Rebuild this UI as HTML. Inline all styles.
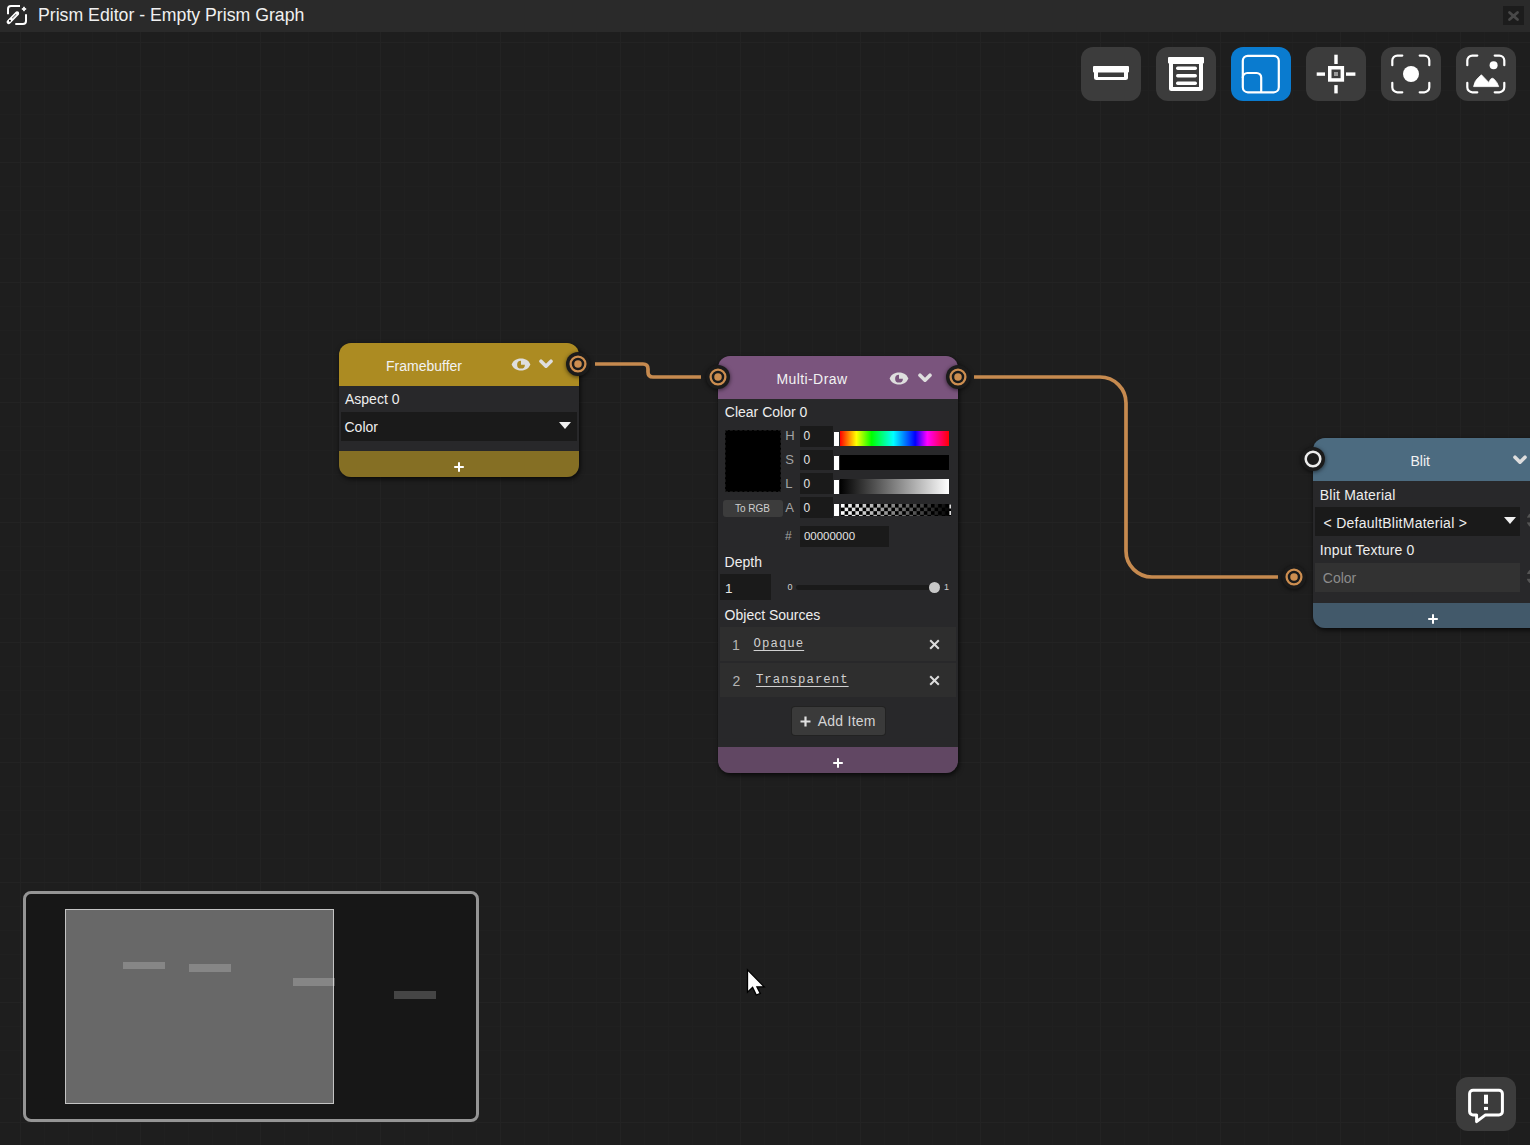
<!DOCTYPE html>
<html><head><meta charset="utf-8">
<style>
*{box-sizing:border-box;margin:0;padding:0}
html,body{width:1530px;height:1145px;overflow:hidden;background:#1e1e1e;font-family:"Liberation Sans",sans-serif;color:#e6e6e6}
.abs{position:absolute}
#canvas{position:absolute;left:0;top:32px;width:1530px;height:1113px;background-color:#1e1e1e;
background-image:
linear-gradient(to right,#232323 1px,transparent 1px),
linear-gradient(to bottom,#232323 1px,transparent 1px),
linear-gradient(to right,#202020 1px,transparent 1px),
linear-gradient(to bottom,#202020 1px,transparent 1px);
background-size:120px 120px,120px 120px,24px 24px,24px 24px;
background-position:20px 0,0 10px,20px 0,0 10px}
#titlebar{position:absolute;left:0;top:0;width:1530px;height:32px;background:#2a2a2a}
#titlebar .t{position:absolute;left:38px;top:4.5px;font-size:17.7px;color:#f0f0f0;line-height:20px}
.tbtn{position:absolute;top:47px;width:60px;height:54px;border-radius:12px;background:#3c3c3c}
.tbtn svg{position:absolute;left:0;top:0}
.node{position:absolute;border-radius:12px;background:#28282a;box-shadow:1px 2px 5px rgba(0,0,0,.75)}
.node .hdr{position:absolute;left:0;top:0;right:0;height:43px;border-radius:12px 12px 0 0}
.node .ftr{position:absolute;left:0;right:0;bottom:0;height:26px;border-radius:0 0 12px 12px}
.ttl{position:absolute;font-size:14px;line-height:16px;color:#f2f2f2}
.lbl{position:absolute;font-size:14px;line-height:16px;color:#eeeeee;white-space:nowrap}
.port{position:absolute;width:24px;height:24px;border-radius:50%;background:#1b1b1b;box-shadow:0 1px 4px rgba(0,0,0,.6)}

.eye{position:absolute}
.dd{position:absolute;background:#1a1a1a}
.tri{position:absolute;width:0;height:0;border-left:6.7px solid transparent;border-right:6.7px solid transparent;border-top:7.5px solid #f0f0f0}
.plus{position:absolute}
.fld{position:absolute;background:#1a1a1a}
.hsl{position:absolute;font-size:13px;line-height:16px;color:#a4a4a4}
.num{position:absolute;font-size:12px;line-height:16px;color:#e4e4e4}
.bar{position:absolute;left:840px;width:109.3px}
.hdl{position:absolute;left:834px;width:5px;background:#fff}
.item{position:absolute;left:720px;width:236px;height:34.5px;background:#2e2e2e}
.idx{position:absolute;font-size:14px;line-height:16px;color:#b4b4b4}
.mono{position:absolute;font-family:"Liberation Mono",monospace;font-size:12.3px;line-height:16px;color:#d0d0d0;letter-spacing:1.05px;text-decoration:underline;text-decoration-thickness:1px;text-underline-offset:3px}
</style></head><body>
<div id="canvas"></div>

<svg class="abs" style="left:0;top:0" width="1530" height="1145">
 <path d="M595 364H643Q648 364 648 369V372Q648 377 653 377H701" fill="none" stroke="#c68a4f" stroke-width="3.7"/>
 <path d="M974 377H1100A26 26 0 0 1 1126 403V551A26 26 0 0 0 1152 577H1278" fill="none" stroke="#c68a4f" stroke-width="3.7"/>
</svg>

<!-- Framebuffer -->
<div class="node" style="left:339px;top:343px;width:240px;height:134px">
 <div class="hdr" style="background:#ac8b22"></div>
 <div class="ftr" style="background:#856f24;height:26px"></div>
</div>
<div class="ttl" style="left:386px;top:358.3px">Framebuffer</div>
<svg class="eye" style="left:510.5px;top:358px" width="20" height="14" viewBox="0 0 20 14"><path d="M0.6 6.6C2.5 2 6.5 0.6 10 0.6C13.5 0.6 17.5 2 19.4 6.6C17.5 11.2 13.5 12.6 10 12.6C6.5 12.6 2.5 11.2 0.6 6.6Z" fill="#dedede"/><path d="M10 2.8A3.9 3.9 0 1 0 13.9 6.7H10Z" fill="#ac8b22"/></svg>
<svg class="eye" style="left:539px;top:359px" width="14" height="10" viewBox="0 0 14 10"><path d="M2 2.2L7 7.2L12 2.2" fill="none" stroke="#dedede" stroke-width="3.6" stroke-linecap="round" stroke-linejoin="round"/></svg>
<div class="lbl" style="left:345px;top:391px">Aspect 0</div>
<div class="dd" style="left:341px;top:412px;width:236px;height:28.5px"></div>
<div class="lbl" style="left:344.5px;top:419px">Color</div>
<div class="tri" style="left:559.3px;top:421.6px"></div>
<svg class="plus" style="left:453px;top:461px" width="12" height="12" viewBox="0 0 12 12"><path d="M6 1.2V10.8M1.2 6H10.8" stroke="#fff" stroke-width="2"/></svg>
<div class="port" style="left:566.4px;top:352px"><svg width="24" height="24" viewBox="0 0 24 24" style="position:absolute;left:0;top:0"><circle cx="12" cy="12" r="7.4" fill="none" stroke="#cd8e50" stroke-width="2.3"/><circle cx="12" cy="12" r="3.75" fill="#cd8e50"/></svg></div>

<!-- Multi-Draw -->
<div class="node" style="left:718px;top:356px;width:240px;height:417px">
 <div class="hdr" style="background:#7a547d"></div>
 <div class="ftr" style="background:#614763"></div>
</div>
<div class="ttl" style="left:776.5px;top:371.4px;letter-spacing:0.4px">Multi-Draw</div>
<svg class="eye" style="left:889px;top:371.6px" width="20" height="14" viewBox="0 0 20 14"><path d="M0.6 6.6C2.5 2 6.5 0.6 10 0.6C13.5 0.6 17.5 2 19.4 6.6C17.5 11.2 13.5 12.6 10 12.6C6.5 12.6 2.5 11.2 0.6 6.6Z" fill="#dedede"/><path d="M10 2.8A3.9 3.9 0 1 0 13.9 6.7H10Z" fill="#7a547d"/></svg>
<svg class="eye" style="left:918px;top:373px" width="14" height="10" viewBox="0 0 14 10"><path d="M2 2.2L7 7.2L12 2.2" fill="none" stroke="#dedede" stroke-width="3.6" stroke-linecap="round" stroke-linejoin="round"/></svg>
<div class="port" style="left:705.5px;top:365.3px"><svg width="24" height="24" viewBox="0 0 24 24" style="position:absolute;left:0;top:0"><circle cx="12" cy="12" r="7.4" fill="none" stroke="#cd8e50" stroke-width="2.3"/><circle cx="12" cy="12" r="3.75" fill="#cd8e50"/></svg></div>
<div class="port" style="left:945.6px;top:365.3px"><svg width="24" height="24" viewBox="0 0 24 24" style="position:absolute;left:0;top:0"><circle cx="12" cy="12" r="7.4" fill="none" stroke="#cd8e50" stroke-width="2.3"/><circle cx="12" cy="12" r="3.75" fill="#cd8e50"/></svg></div>
<div class="lbl" style="left:724.8px;top:404.2px">Clear Color 0</div>
<div class="abs" style="left:725px;top:430px;width:55.5px;height:62px;background:#000;border:1px dashed #161616"></div>
<div class="abs" style="left:723.3px;top:500px;width:59.7px;height:16.5px;background:#3c3c3c;border-radius:3px"></div>
<div class="abs" style="left:734.9px;top:502.5px;font-size:10px;line-height:12px;color:#cfcfcf">To RGB</div>
<div class="hsl" style="left:785.3px;top:427.5px">H</div>
<div class="hsl" style="left:785.3px;top:452px">S</div>
<div class="hsl" style="left:785.3px;top:475.6px">L</div>
<div class="hsl" style="left:785.3px;top:499.5px">A</div>
<div class="fld" style="left:800.2px;top:426.3px;width:32.7px;height:20.6px"></div>
<div class="fld" style="left:800.2px;top:450.1px;width:32.7px;height:20.4px"></div>
<div class="fld" style="left:800.2px;top:473.4px;width:32.7px;height:20.4px"></div>
<div class="fld" style="left:800.2px;top:497.3px;width:32.7px;height:20.3px"></div>
<div class="num" style="left:803.6px;top:428.4px">0</div>
<div class="num" style="left:803.6px;top:452.2px">0</div>
<div class="num" style="left:803.6px;top:475.8px">0</div>
<div class="num" style="left:803.6px;top:499.7px">0</div>
<div class="bar" style="top:431px;height:15px;background:linear-gradient(to right,#f00 0%,#ff0 15%,#0f0 29%,#0ff 49%,#00f 69%,#f0f 80%,#f00 100%)"></div>
<div class="bar" style="top:455.3px;height:14.7px;background:#000"></div>
<div class="bar" style="top:479px;height:15px;background:linear-gradient(to right,#000,#fff)"></div>
<svg class="abs" style="left:840.6px;top:503.7px" width="110.4" height="12.3" viewBox="0 0 110.4 12.3">
 <defs><pattern id="chk" width="7.2" height="7.2" patternUnits="userSpaceOnUse"><rect width="7.2" height="7.2" fill="#000"/><rect width="3.6" height="3.6" fill="#fff"/><rect x="3.6" y="3.6" width="3.6" height="3.6" fill="#fff"/></pattern>
 <linearGradient id="fade" x1="0" x2="1" y1="0" y2="0"><stop offset="0" stop-color="#000" stop-opacity="0"/><stop offset="1" stop-color="#000" stop-opacity="1"/></linearGradient></defs>
 <rect width="110.4" height="12.3" fill="url(#chk)"/><rect width="110.4" height="12.3" fill="url(#fade)"/>
 <rect x="108.4" y="0.5" width="2" height="4" fill="#ddd"/><rect x="108.4" y="7" width="2" height="4" fill="#ddd"/>
</svg>
<div class="hdl" style="top:432px;height:14px"></div>
<div class="hdl" style="top:456px;height:14px"></div>
<div class="hdl" style="top:479.5px;height:14.5px"></div>
<div class="hdl" style="top:503.5px;height:12.5px"></div>
<div class="hsl" style="left:785.1px;top:527.6px;font-size:12px">#</div>
<div class="fld" style="left:800px;top:526.2px;width:88.8px;height:20.7px"></div>
<div class="num" style="left:803.9px;top:527.6px;font-size:11.5px">00000000</div>
<div class="lbl" style="left:724.6px;top:554.2px">Depth</div>
<div class="fld" style="left:720.3px;top:574.3px;width:50.4px;height:25.4px"></div>
<div class="num" style="left:725px;top:581px;font-size:13.5px">1</div>
<div class="abs" style="left:787.5px;top:582px;font-size:9px;line-height:11px;color:#d0d0d0">0</div>
<div class="abs" style="left:796.2px;top:585.3px;width:140px;height:4.8px;background:#1a1a1a;border-radius:2.4px"></div>
<div class="abs" style="left:929px;top:582px;width:11px;height:11px;border-radius:50%;background:#c8c8c8"></div>
<div class="abs" style="left:944px;top:582px;font-size:9px;line-height:11px;color:#d0d0d0">1</div>
<div class="lbl" style="left:724.6px;top:607.2px">Object Sources</div>
<div class="item" style="top:626.8px"></div>
<div class="item" style="top:662.8px"></div>
<div class="idx" style="left:732px;top:637.3px">1</div>
<div class="mono" style="left:753.6px;top:635.8px">Opaque</div>
<div class="idx" style="left:732.6px;top:673px">2</div>
<div class="mono" style="left:755.9px;top:671.6px">Transparent</div>
<svg class="abs" style="left:929px;top:639px" width="11" height="11" viewBox="0 0 11 11"><path d="M1.2 1.2L9.8 9.8M9.8 1.2L1.2 9.8" stroke="#dcdcdc" stroke-width="2"/></svg>
<svg class="abs" style="left:929px;top:675px" width="11" height="11" viewBox="0 0 11 11"><path d="M1.2 1.2L9.8 9.8M9.8 1.2L1.2 9.8" stroke="#dcdcdc" stroke-width="2"/></svg>
<div class="abs" style="left:792.2px;top:707px;width:92.6px;height:28px;background:#3a3a3a;border-radius:3px;box-shadow:0 0 0 1px #222"></div>
<svg class="abs" style="left:799.5px;top:715.5px" width="11" height="11" viewBox="0 0 11 11"><path d="M5.5 0.5V10.5M0.5 5.5H10.5" stroke="#e0e0e0" stroke-width="2.2"/></svg>
<div class="lbl" style="left:817.7px;top:712.8px;color:#d4d4d4;letter-spacing:0.25px">Add Item</div>
<svg class="plus" style="left:832.4px;top:757.3px" width="12" height="12" viewBox="0 0 12 12"><path d="M6 1.2V10.8M1.2 6H10.8" stroke="#fff" stroke-width="2"/></svg>

<!-- Blit -->
<div class="node" style="left:1313px;top:438px;width:240px;height:190px">
 <div class="hdr" style="background:#4c6b80"></div>
 <div class="ftr" style="background:#42596a;height:25px"></div>
</div>
<div class="ttl" style="left:1410.5px;top:453.2px">Blit</div>
<svg class="eye" style="left:1513px;top:455px" width="14" height="10" viewBox="0 0 14 10"><path d="M2 2.2L7 7.2L12 2.2" fill="none" stroke="#dedede" stroke-width="3.6" stroke-linecap="round" stroke-linejoin="round"/></svg>
<div class="port" style="left:1300.5px;top:447.2px"><svg width="24" height="24" viewBox="0 0 24 24" style="position:absolute;left:0;top:0"><circle cx="12" cy="12" r="7.3" fill="none" stroke="#ececec" stroke-width="2.5"/></svg></div>
<div class="lbl" style="left:1319.8px;top:487px;letter-spacing:0.2px">Blit Material</div>
<div class="dd" style="left:1315px;top:507px;width:205px;height:28.8px"></div>
<div class="lbl" style="left:1323.6px;top:514.6px;letter-spacing:0.25px">&lt; DefaultBlitMaterial &gt;</div>
<div class="tri" style="left:1503.5px;top:516.9px;border-left-width:6.3px;border-right-width:6.3px;border-top-width:7px"></div>
<div class="lbl" style="left:1319.8px;top:542.2px;letter-spacing:0.15px">Input Texture 0</div>
<div class="abs" style="left:1315px;top:563px;width:205px;height:29px;background:#323232"></div>
<div class="lbl" style="left:1322.8px;top:570.2px;color:#8c8c8c">Color</div>
<div class="port" style="left:1282.3px;top:564.6px"><svg width="24" height="24" viewBox="0 0 24 24" style="position:absolute;left:0;top:0"><circle cx="12" cy="12" r="7.4" fill="none" stroke="#cd8e50" stroke-width="2.3"/><circle cx="12" cy="12" r="3.75" fill="#cd8e50"/></svg></div>
<svg class="plus" style="left:1427.3px;top:613px" width="12" height="12" viewBox="0 0 12 12"><path d="M6 1.2V10.8M1.2 6H10.8" stroke="#fff" stroke-width="2"/></svg>


<svg class="abs" style="left:1524px;top:510px" width="6" height="20" viewBox="1524 510 6 20"><circle cx="1534.5" cy="520.1" r="8" fill="#555"/><rect x="1524" y="517.6" width="6" height="4.8" fill="#28282a"/></svg>
<svg class="abs" style="left:1524px;top:566px" width="6" height="20" viewBox="1524 566 6 20"><circle cx="1534.5" cy="576.5" r="8" fill="#555"/><rect x="1524" y="574" width="6" height="4.8" fill="#28282a"/></svg>
<!-- minimap -->
<div class="abs" style="left:23px;top:891px;width:456px;height:231px;border:3px solid #959595;border-radius:8px;background:#171717"></div>
<div class="abs" style="left:65px;top:909px;width:269px;height:195px;background:#686868;border:1px solid #c4c4c4"></div>
<div class="abs" style="left:122.5px;top:961.5px;width:42px;height:7.5px;background:rgba(255,255,255,0.2)"></div>
<div class="abs" style="left:189px;top:964px;width:42px;height:7.5px;background:rgba(255,255,255,0.2)"></div>
<div class="abs" style="left:293px;top:978.2px;width:42px;height:7.8px;background:rgba(255,255,255,0.2)"></div>
<div class="abs" style="left:393.5px;top:991px;width:42px;height:7.5px;background:rgba(255,255,255,0.2)"></div>
<!-- cursor -->
<svg class="abs" style="left:740px;top:962px" width="32" height="40" viewBox="740 962 32 40">
 <path d="M747.5 969.8V992.3L752.6 987.4L756.3 995L760.3 993.4L756.9 986.8H764.2Z" fill="#fff" stroke="#000" stroke-width="1.3" stroke-linejoin="miter"/>
</svg>

<div id="titlebar">
 <svg class="abs" style="left:0;top:0" width="34" height="31" viewBox="0 0 34 31">
  <path d="M8 14.3V9a3 3 0 0 1 3-3H20" fill="none" stroke="#fff" stroke-width="2"/>
  <path d="M26 14.3V21a3 3 0 0 1-3 3H15.3" fill="none" stroke="#fff" stroke-width="2"/>
  <path d="M8.7 21.9L17 13.6" stroke="#fff" stroke-width="4.2" stroke-linecap="round"/>
  <path d="M18.6 15.1L15.5 12L18.8 11.8Z" fill="#fff"/>
  <circle cx="12.8" cy="17.8" r="0.55" fill="#000"/><circle cx="13.8" cy="16.8" r="0.55" fill="#000"/><circle cx="14.8" cy="15.8" r="0.55" fill="#000"/><circle cx="15.8" cy="14.8" r="0.55" fill="#000"/>
  <circle cx="9.9" cy="20.8" r="0.95" fill="#000"/>
  <path d="M24 6.8Q24.6 8.6 26.2 9Q24.6 9.4 24 11.2Q23.4 9.4 21.8 9Q23.4 8.6 24 6.8Z" fill="#fff" stroke="#fff" stroke-width="0.8" stroke-linejoin="round"/>
 </svg>
 <div class="t">Prism Editor - Empty Prism Graph</div>
 <div class="abs" style="left:1503px;top:6px;width:21px;height:19px;background:#1c1c1c"></div>
 <svg class="abs" style="left:1503px;top:6px" width="21" height="19" viewBox="0 0 21 19">
  <path d="M6.5 6.5L14.5 13.5M14.5 6.5L6.5 13.5" stroke="#484848" stroke-width="2.8" stroke-linecap="round"/>
  <rect x="8.5" y="8" width="4" height="4" fill="#484848"/>
 </svg>
</div>

<div class="tbtn" style="left:1081px"><svg width="60" height="54" viewBox="0 0 60 54">
 <rect x="12" y="19" width="36" height="6.5" rx="1" fill="#fff"/>
 <rect x="13" y="21" width="34" height="12" rx="2.5" fill="#fff"/>
 <rect x="17" y="25.5" width="26" height="4.5" fill="#3c3c3c"/>
</svg></div>
<div class="tbtn" style="left:1156px"><svg width="60" height="54" viewBox="0 0 60 54">
 <rect x="12" y="10" width="36" height="6.5" rx="1" fill="#fff"/>
 <rect x="13" y="14" width="34" height="30" rx="2.5" fill="#fff"/>
 <rect x="17" y="17" width="26" height="23" fill="#3c3c3c"/>
 <rect x="20" y="19.5" width="21" height="3.4" rx="1.7" fill="#fff"/>
 <rect x="20" y="27" width="21" height="3.4" rx="1.7" fill="#fff"/>
 <rect x="20" y="34.6" width="21" height="3.4" rx="1.7" fill="#fff"/>
</svg></div>
<div class="tbtn" style="left:1231px;background:#0a7bcf"><svg width="60" height="54" viewBox="0 0 60 54">
 <rect x="11.8" y="8.8" width="36" height="36.5" rx="5" fill="none" stroke="#fff" stroke-width="2.2"/>
 <path d="M11.8 31V30.5a4.5 4.5 0 0 1 4.5-4.5H25.7a4.5 4.5 0 0 1 4.5 4.5V45.3" fill="none" stroke="#fff" stroke-width="2.2"/>
</svg></div>
<div class="tbtn" style="left:1306px"><svg width="60" height="54" viewBox="0 0 60 54">
 <rect x="23.75" y="20.75" width="12.6" height="12.2" fill="none" stroke="#fff" stroke-width="3.5"/>
 <rect x="28" y="25" width="4" height="4" fill="#9a9a9a"/>
 <rect x="28.3" y="7.7" width="3.4" height="9.3" fill="#fff"/>
 <rect x="28.3" y="38.1" width="3.4" height="8.3" fill="#fff"/>
 <rect x="10.7" y="25.4" width="8.3" height="3.4" fill="#fff"/>
 <rect x="40" y="25.4" width="9.4" height="3.4" fill="#fff"/>
</svg></div>
<div class="tbtn" style="left:1381px"><svg width="60" height="54" viewBox="0 0 60 54">
 <path d="M11.3 18.2V13.6a5 5 0 0 1 5-5H21.3M38.7 8.6H43.3a5 5 0 0 1 5 5V18.2M48.3 35.8V40.3a5 5 0 0 1-5 5H38.7M21.3 45.3H16.3a5 5 0 0 1-5-5V35.8" fill="none" stroke="#fff" stroke-width="2.2" stroke-linecap="round"/>
 <circle cx="30" cy="27" r="8" fill="#fff"/>
</svg></div>
<div class="tbtn" style="left:1456px"><svg width="60" height="54" viewBox="0 0 60 54">
 <path d="M11.3 18.2V13.6a5 5 0 0 1 5-5H21.3M38.7 8.6H43.3a5 5 0 0 1 5 5V18.2M48.3 35.8V40.3a5 5 0 0 1-5 5H38.7M21.3 45.3H16.3a5 5 0 0 1-5-5V35.8" fill="none" stroke="#fff" stroke-width="2.2" stroke-linecap="round"/>
 <circle cx="37.6" cy="18.2" r="4" fill="#fff"/>
 <path d="M17.6 39.6Q18.6 33.8 22.4 30.6L25.4 27.8L32.7 35.4L34.6 32.2Q36.3 30.2 38.4 32.4Q41.4 35.4 42.7 39.6Z" fill="#fff" stroke="#fff" stroke-width="0.8" stroke-linejoin="round"/>
</svg></div>
<div class="tbtn" style="left:1456px;top:1077px"><svg width="60" height="54" viewBox="0 0 60 54">
 <path d="M17 13.3H43a3.4 3.4 0 0 1 3.4 3.4V34.5a3.4 3.4 0 0 1-3.4 3.4H29.5L20.6 44.6V37.9H17a3.4 3.4 0 0 1-3.4-3.4V16.7a3.4 3.4 0 0 1 3.4-3.4Z" fill="none" stroke="#fff" stroke-width="3" stroke-linejoin="round"/>
 <rect x="28" y="17.7" width="4" height="9.1" fill="#fff"/>
 <rect x="28" y="29.9" width="4" height="3.2" fill="#fff"/>
</svg></div>
</body></html>
